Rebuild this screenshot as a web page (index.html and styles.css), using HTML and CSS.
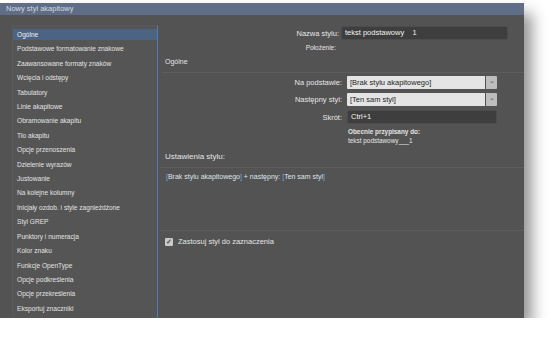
FILE: index.html
```html
<!DOCTYPE html>
<html lang="pl">
<head>
<meta charset="utf-8">
<link rel="stylesheet" href="styles.css">
</head>
<body>
<div class="dialog">
  <div class="titlebar">Nowy styl akapitowy</div>
  <div class="content">
    <ul class="nav">
      <li class="sel">Ogólne</li>
      <li>Podstawowe formatowanie znakowe</li>
      <li>Zaawansowane formaty znaków</li>
      <li>Wcięcia i odstępy</li>
      <li>Tabulatory</li>
      <li>Linie akapitowe</li>
      <li>Obramowanie akapitu</li>
      <li>Tło akapitu</li>
      <li>Opcje przenoszenia</li>
      <li>Dzielenie wyrazów</li>
      <li>Justowanie</li>
      <li>Na kolejne kolumny</li>
      <li>Inicjały ozdob. i style zagnieżdżone</li>
      <li>Styl GREP</li>
      <li>Punktory i numeracja</li>
      <li>Kolor znaku</li>
      <li>Funkcje OpenType</li>
      <li>Opcje podkreślenia</li>
      <li>Opcje przekreślenia</li>
      <li>Eksportuj znaczniki</li>
    </ul>
    <div class="main">
      <div class="namerow">
        <span class="label">Nazwa stylu:</span>
        <span class="input name">tekst podstawowy&nbsp;&nbsp;&nbsp;&nbsp;1</span>
      </div>
      <div class="posrow"><span class="label">Położenie:</span></div>
      <div class="heading">Ogólne</div>
      <div class="sep"></div>
      <div class="form">
        <span class="label">Na podstawie:</span>
        <span class="select"><span class="val">[Brak stylu akapitowego]</span><span class="btn">⌄</span></span>
        <span class="label">Następny styl:</span>
        <span class="select"><span class="val">[Ten sam styl]</span><span class="btn">⌄</span></span>
        <span class="label">Skrót:</span>
        <span class="input short">Ctrl+1</span>
        <span></span>
        <span class="note"><b>Obecnie przypisany do:</b><br>tekst podstawowy___1</span>
      </div>
      <div class="heading h2">Ustawienia stylu:</div>
      <div class="sep full"></div>
      <div class="desc"><span class="br">[</span>Brak stylu akapitowego<span class="br">]</span> + następny: <span class="br">[</span>Ten sam styl<span class="br">]</span></div>
      <div class="sep full low"></div>
      <label class="check"><span class="box">✓</span>Zastosuj styl do zaznaczenia</label>
    </div>
  </div>
</div>
</body>
</html>
```
FILE: styles.css
```css
* { box-sizing: border-box; }
html, body { margin: 0; padding: 0; background: #fff; }
body {
  font-family: "Liberation Sans", Arial, sans-serif;
  font-size: 7px;
  color: #e4e4e4;
}
.dialog {
  margin-top: 3px;
  width: 524px;
  height: 315px;
  background: #535353;
  box-shadow: 8px 10px 14px rgba(0, 0, 0, 0.42);
  display: flex;
  flex-direction: column;
}
.titlebar {
  height: 12px;
  background: #5f6e86;
  color: #d6dbe4;
  padding-left: 6px;
  line-height: 12px;
  font-size: 7.5px;
}
.content {
  flex: 1;
  display: flex;
  min-height: 0;
}
.nav {
  list-style: none;
  margin: 10px 0 0 12px;
  padding: 3px 0 0 0;
  width: 146px;
  background: #555555;
  border-right: 1px solid #4c7fb8;
  border-top: 1px solid #5b5b5b;
  border-left: 1px solid #5b5b5b;
  font-size: 6.6px;
}
.nav li {
  height: 14.42px;
  line-height: 11px;
  padding-left: 4px;
  white-space: nowrap;
  color: #e2e2e2;
}
.nav li.sel {
  background: #4b6484;
  height: 11px;
  margin-bottom: 3.42px;
  color: #f0f0f0;
}
.main {
  flex: 1;
  display: flex;
  flex-direction: column;
  padding-top: 11px;
}
.namerow {
  display: flex;
  align-items: center;
  height: 14px;
}
.namerow .label {
  width: 183px;
  text-align: right;
  padding-right: 2px;
  font-size: 7.5px;
}
.label { color: #e6e6e6; white-space: nowrap; }
.input {
  background: #3e3e3e;
  border: 1px solid #4c4c4c;
  border-radius: 2px;
  height: 14px;
  line-height: 12px;
  padding-left: 3px;
  color: #f2f2f2;
}
.input.name { width: 167px; font-size: 7.5px; }
.posrow {
  height: 13px;
  display: flex;
  align-items: center;
  margin-top: 1px;
}
.posrow .label {
  width: 178px;
  text-align: right;
  font-size: 6.5px;
}
.heading {
  margin: 3px 0 0 7px;
  height: 10px;
  line-height: 10px;
}
.sep {
  height: 1px;
  background: #5d5d5d;
  margin-top: 5px;
  margin-left: 4px;
}
.sep.full { margin-left: 2px; }
.form {
  display: grid;
  grid-template-columns: 184px 150px;
  column-gap: 5px;
  row-gap: 4px;
  align-items: center;
  margin-top: 3px;
}
.form .label { text-align: right; font-size: 7.5px; }
.select {
  display: flex;
  height: 13px;
  border-radius: 1px;
  overflow: hidden;
}
.select .val {
  width: 139px;
  background: #e4e4e4;
  color: #1e1e1e;
  line-height: 13px;
  padding-left: 3px;
  font-size: 7.5px;
}
.select .btn {
  width: 11px;
  background: #bdbdbd;
  color: #555;
  text-align: center;
  line-height: 9px;
  font-size: 7px;
  margin-left: 1px;
}
.input.short { width: 150px; font-size: 7.5px; }
.form .note {
  grid-column: 2;
  font-size: 6.4px;
  line-height: 9px;
  margin-top: -1px;
  padding-left: 1px;
}
.note b { font-weight: 700; }
.h2 { margin-top: 7px; font-size: 8px; }
.desc {
  margin: 4px 0 0 8px;
  font-size: 7px;
  color: #dfe3ea;
  height: 10px;
  line-height: 10px;
}
.desc .br { color: #7ea6dc; }
.sep.low { margin-top: 48px; }
.check {
  display: flex;
  align-items: center;
  margin: 6px 0 0 7px;
  font-size: 7.5px;
}
.box {
  width: 8px;
  height: 8px;
  background: #c9c9c9;
  color: #4a4a4a;
  border-radius: 1px;
  font-size: 7px;
  line-height: 8px;
  text-align: center;
  margin-right: 5px;
  font-weight: bold;
}
```
